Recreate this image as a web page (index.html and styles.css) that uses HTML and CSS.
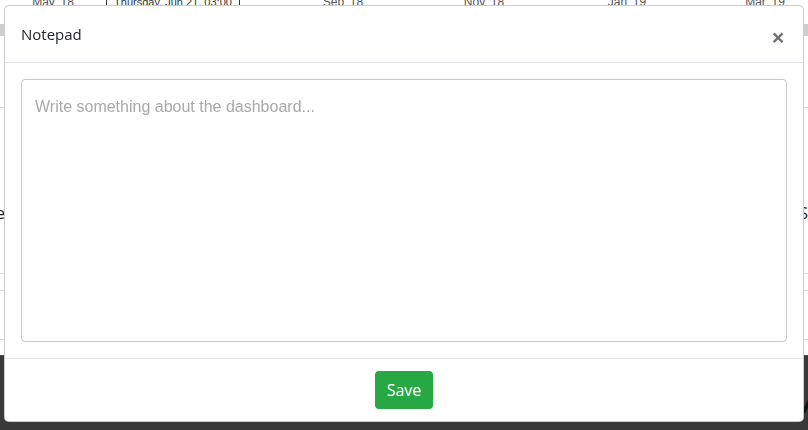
FILE: index.html
```html
<!DOCTYPE html>
<html lang="en">
<head>
  <meta charset="UTF-8" />
  <meta name="viewport" content="width=device-width, initial-scale=1.0"/>
  <title>Dashboard - Notepad</title>
  <link rel="stylesheet" href="styles.css">
</head>
<body>
  <div class="page">
    <div class="axis">
      <span>May '18</span>
      <span class="axis-tip"><span class="tip-box">Thursday, Jun 21, 03:00</span></span>
      <span>Sep '18</span>
      <span>Nov '18</span>
      <span>Jan '19</span>
      <span>Mar '19</span>
    </div>
    <div class="scroller"></div>

    <div class="table">
      <div class="row row-short"></div>
      <div class="row row-text">
        <span class="cut-left">e</span>
        <span>S</span>
      </div>
      <div class="row row-thin"></div>
      <div class="row row-last"></div>
    </div>

    <footer class="dark-band">
      <span class="band-mark">/</span>
    </footer>
  </div>

  <div class="modal">
    <div class="modal-header">
      <h5 class="modal-title">Notepad</h5>
      <button type="button" class="close">&times;</button>
    </div>
    <div class="modal-body">
      <textarea class="note" placeholder="Write something about the dashboard..."></textarea>
    </div>
    <div class="modal-footer">
      <button type="button" class="btn-save">Save</button>
    </div>
  </div>
</body>
</html>
```

FILE: styles.css
```css
* {
  margin: 0;
  padding: 0;
  box-sizing: border-box;
}
html, body {
  height: 100%;
  overflow: hidden;
}
body {
  font-family: 'Open Sans', 'Noto Sans', sans-serif;
  background: #fff;
  color: #212529;
}
.page {
  display: flex;
  flex-direction: column;
  height: calc(100% + 4px);
  margin-top: -4px;
}
.axis {
  display: grid;
  grid-template-columns: 106px 134px 206px 76px 210px 66px;
  height: 13px;
  font-family: 'Liberation Sans', Arial, sans-serif;
  font-size: 12px;
  line-height: 13px;
  color: #555;
  text-align: center;
}
.axis-tip {
  display: flex;
}
.tip-box {
  flex: 1;
  border: 1px solid #333;
  border-top: none;
  background: #fff;
  color: #333;
  font-size: 11px;
}
.scroller {
  margin-top: 15px;
  height: 12px;
  background: #cfcfcf;
}
.table {
  flex: 1;
  display: flex;
  flex-direction: column;
}
.row {
  border-bottom: 1px solid #ddd;
}
.row-short {
  height: 72px;
}
.row-text {
  height: 166px;
  display: flex;
  justify-content: space-between;
  align-items: flex-start;
  padding-top: 94px;
  font-size: 16px;
  color: #222;
}
.cut-left {
  margin-left: -4px;
}
.row-thin {
  height: 17px;
}
.row-last {
  height: 49px;
}
.dark-band {
  height: 75px;
  background: #393939;
  border-top: 1px solid #5d3f5b;
  display: flex;
  justify-content: flex-end;
  align-items: center;
}
.band-mark {
  font-size: 28px;
  font-style: italic;
  font-weight: 700;
  color: #111;
  margin-right: -6px;
  margin-top: 18px;
}

/* notepad dialog */
.modal {
  position: fixed;
  top: 5px;
  left: 4px;
  width: 800px;
  height: 417px;
  display: flex;
  flex-direction: column;
  background: #fff;
  border: 1px solid rgba(0,0,0,0.2);
  border-radius: 5px;
}
.modal-header {
  display: flex;
  justify-content: space-between;
  align-items: flex-start;
  padding: 16px;
  border-bottom: 1px solid #e3e5ea;
}
.modal-title {
  font-size: 15px;
  font-weight: 400;
  line-height: 24px;
  color: #212529;
}
.close {
  background: none;
  border: none;
  font-family: 'Open Sans', sans-serif;
  font-size: 24px;
  font-weight: 700;
  line-height: 24px;
  color: #000;
  opacity: 0.55;
  margin: 3px 2px -3px 0;
  cursor: pointer;
}
.modal-body {
  flex: 1;
  display: flex;
  padding: 16px;
}
.note {
  flex: 1;
  resize: none;
  border: 1px solid #c9c9c9;
  border-radius: 4px;
  padding: 15px 13px;
  font-family: 'Liberation Sans', Arial, sans-serif;
  font-size: 16px;
  line-height: 24px;
  color: #495057;
  outline: none;
}
.note::placeholder {
  color: #a9a9a9;
}
.modal-footer {
  display: flex;
  justify-content: center;
  padding: 12px;
  border-top: 1px solid #e3e5ea;
}
.btn-save {
  background: #28a745;
  color: #fff;
  border: none;
  border-radius: 4px;
  padding: 7px 12px;
  font-family: 'Open Sans', sans-serif;
  font-size: 16px;
  line-height: 24px;
  cursor: pointer;
}
```
